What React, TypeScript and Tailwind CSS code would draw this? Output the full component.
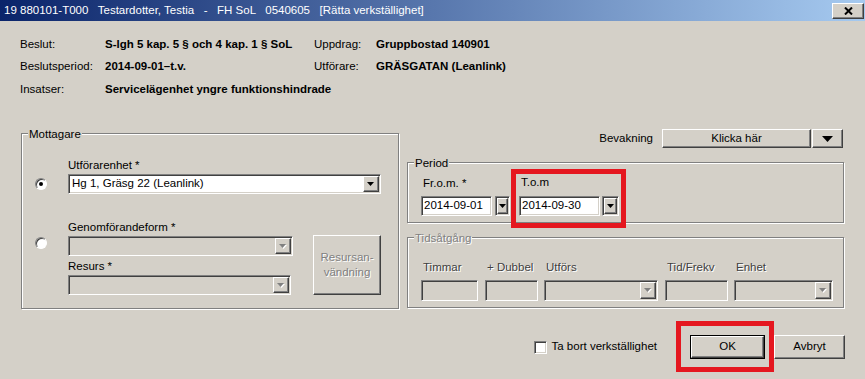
import React from "react";

const sunken =
  "border border-t-[#808080] border-l-[#808080] border-b-white border-r-white shadow-[inset_1px_1px_0_#404040,inset_-1px_-1px_0_#d4d0c8]";
const raised =
  "border border-t-white border-l-white border-b-[#404040] border-r-[#404040] shadow-[inset_-1px_-1px_0_#808080,inset_1px_1px_0_#d4d0c8] bg-[#d4d0c8]";
const disabledText = "text-[#808080] [text-shadow:1px_1px_0_#fff]";

function Arrow({ disabled, big }: { disabled?: boolean; big?: boolean }) {
  if (big) {
    return (
      <svg width="11" height="6" viewBox="0 0 11 6">
        <path d="M0 0h11L5.5 6z" fill="#000" />
      </svg>
    );
  }
  return (
    <svg width="8" height="5" viewBox="0 0 8 5">
      {disabled && <path d="M1 1h7L4.5 5z" fill="#fff" />}
      <path d="M0 0h7L3.5 4z" fill={disabled ? "#808080" : "#000"} />
    </svg>
  );
}

function DropBtn({ disabled }: { disabled?: boolean }) {
  return (
    <div className={`${raised} w-[16px] flex items-center justify-center`}>
      <Arrow disabled={disabled} />
    </div>
  );
}

function Combo({
  value,
  disabled,
  className,
}: {
  value?: string;
  disabled?: boolean;
  className: string;
}) {
  return (
    <div
      className={`${sunken} ${disabled ? "bg-[#d4d0c8]" : "bg-white"} flex p-[1px] ${className}`}
    >
      <div className="flex-1 pl-[2px] flex items-center truncate">{value}</div>
      <DropBtn disabled={disabled} />
    </div>
  );
}

function DateField({ value, width, btn }: { value: string; width: string; btn: string }) {
  return (
    <div className="flex h-[20px]">
      <div className={`${sunken} bg-white ${width} pl-[2px] flex items-center`}>{value}</div>
      <div className={`${sunken} ${btn} p-[1px] flex`}>
        <div className={`${raised} flex-1 flex items-center justify-center`}>
          <Arrow />
        </div>
      </div>
    </div>
  );
}

function Group({
  title,
  disabled,
  className,
  children,
}: {
  title: string;
  disabled?: boolean;
  className: string;
  children: React.ReactNode;
}) {
  return (
    <div
      className={`border border-[#808080] shadow-[1px_1px_0_#fff,inset_1px_1px_0_#fff] ${className}`}
    >
      <div
        className={`-mt-[7px] ml-[6px] w-fit px-[1px] bg-[#d4d0c8] leading-[14px] ${disabled ? disabledText : ""}`}
      >
        {title}
      </div>
      {children}
    </div>
  );
}

function Radio({ checked, className }: { checked?: boolean; className: string }) {
  return (
    <div
      className={`w-[12px] h-[12px] rounded-full border border-t-[#808080] border-l-[#808080] border-b-white border-r-white bg-white shadow-[inset_1px_1px_0_#404040] flex items-center justify-center ${className}`}
    >
      {checked && <div className="w-[4px] h-[4px] rounded-full bg-black" />}
    </div>
  );
}

const info = [
  ["Beslut:", "S-lgh 5 kap. 5 § och 4 kap. 1 § SoL", "Uppdrag:", "Gruppbostad 140901"],
  ["Beslutsperiod:", "2014-09-01–t.v.", "Utförare:", "GRÄSGATAN (Leanlink)"],
  ["Insatser:", "Servicelägenhet yngre funktionshindrade", "", ""],
];

const tids = [
  { label: "Timmar", w: "w-[57px]", ml: "ml-0", combo: false },
  { label: "+ Dubbel", w: "w-[53px]", ml: "ml-[7px]", combo: false },
  { label: "Utförs", w: "w-[114px]", ml: "ml-[6px]", combo: true },
  { label: "Tid/Frekv", w: "w-[63px]", ml: "ml-[7px]", combo: false },
  { label: "Enhet", w: "w-[99px]", ml: "ml-[6px]", combo: true },
];

export default function App() {
  return (
    <div className="relative w-[865px] h-[379px] overflow-hidden bg-[#d4d0c8] flex flex-col text-[11.5px] text-black font-['Liberation_Sans',Arial,sans-serif]">
      {/* title bar */}
      <div className="h-[21px] shrink-0 flex items-center pl-[4px] pr-[1px] bg-linear-to-r/srgb from-[#0a246a] to-[#a6caf0] text-white text-[11.5px]">
        <span className="whitespace-pre">
          19 880101-T000   Testardotter, Testia   -   FH SoL   0540605   [Rätta verkställighet]
        </span>
        <div className={`${raised} ml-auto w-[32px] h-[16px] flex items-center justify-center`}>
          <svg width="9" height="8" viewBox="0 0 9 8">
            <path d="M1 0.5l7 7M8 0.5l-7 7" stroke="#000" strokeWidth="2" />
          </svg>
        </div>
      </div>

      {/* decision info */}
      <div className="mt-[12px] pl-[20px] grid grid-cols-[85px_209px_62px_auto] auto-rows-[22.5px] items-center">
        {info.map((r) => (
          <React.Fragment key={r[0]}>
            <div>{r[0]}</div>
            <div className={`font-bold ${r[0] === "Insatser:" ? "col-span-3" : ""}`}>{r[1]}</div>
            {r[2] && <div>{r[2]}</div>}
            {r[2] && <div className="font-bold">{r[3]}</div>}
          </React.Fragment>
        ))}
      </div>

      {/* main */}
      <div className="mt-[28.5px] pl-[21px] flex">
        <Group title="Mottagare" className="mt-[4px] w-[378px] h-[176px]">
          <div className="mt-[17px] pl-[13px] flex">
            <Radio checked className="self-end mb-[4px] mr-[21px]" />
            <div className="flex flex-col">
              <div className="leading-[14px]">Utförarenhet *</div>
              <Combo value="Hg 1, Gräsg 22 (Leanlink)" className="mt-[2px] w-[313px] h-[20px]" />
            </div>
          </div>
          <div className="mt-[26px] pl-[13px] flex">
            <Radio className="mt-[17px] mr-[21px]" />
            <div className="flex flex-col">
              <div className="leading-[14px]">Genomförandeform *</div>
              <Combo disabled className="mt-[2px] w-[225px] h-[20px]" />
              <div className="mt-[3px] leading-[14px]">Resurs *</div>
              <Combo disabled className="mt-[2px] w-[223px] h-[20px]" />
            </div>
            <div
              className={`${raised} ml-[20px] mt-[15px] w-[68px] h-[60px] flex items-center justify-center text-center leading-[15px] ${disabledText}`}
            >
              Resursan-
              <br />
              vändning
            </div>
          </div>
        </Group>

        <div className="ml-[8px] w-[437px] flex flex-col">
          <div className="h-[19px] flex items-center justify-end pr-[1px]">
            <span className="mr-[9px]">Bevakning</span>
            <div className={`${raised} w-[149px] h-[19px] flex items-center justify-center`}>
              Klicka här
            </div>
            <div className={`${raised} ml-[1px] w-[31px] h-[19px] flex items-center justify-center`}>
              <Arrow big />
            </div>
          </div>

          <Group title="Period" className="mt-[14px] h-[61px]">
            <div className="pl-[13px] flex">
              <div className="flex flex-col">
                <div className="mt-[6px] pl-[2px] leading-[14px]">Fr.o.m. *</div>
                <div className="mt-[6px] flex">
                  <DateField value="2014-09-01" width="w-[71px]" btn="ml-[3px] w-[15px]" />
                </div>
              </div>
              <div className="ml-[9px] flex flex-col">
                <div className="mt-[5px] pl-[2px] leading-[14px]">T.o.m</div>
                <div className="mt-[7px] flex">
                  <DateField value="2014-09-30" width="w-[81px]" btn="ml-[2px] w-[17px]" />
                </div>
              </div>
            </div>
          </Group>

          <Group title="Tidsåtgång" disabled className="mt-[14px] h-[71px]">
            <div className="pl-[13px] mt-[15px] flex">
              {tids.map((t) => (
                <div key={t.label} className={`flex flex-col ${t.ml}`}>
                  <div className="pl-[2px] leading-[14px] text-[#404040] [text-shadow:1px_1px_0_#fff]">
                    {t.label}
                  </div>
                  {t.combo ? (
                    <Combo disabled className={`mt-[6px] h-[21px] ${t.w}`} />
                  ) : (
                    <div className={`${sunken} mt-[6px] h-[21px] ${t.w}`} />
                  )}
                </div>
              ))}
            </div>
          </Group>
        </div>
      </div>

      {/* footer */}
      <div className="mt-[26px] h-[24px] pr-[20px] flex items-center justify-end">
        <div className={`${sunken} w-[13px] h-[13px] bg-white`} />
        <span className="ml-[5px]">Ta bort verkställighet</span>
        <div className="ml-[33px] w-[75px] h-[24px] border border-black flex">
          <div className={`${raised} flex-1 flex items-center justify-center`}>OK</div>
        </div>
        <div className={`${raised} ml-[9px] w-[71px] h-[24px] flex items-center justify-center`}>
          Avbryt
        </div>
      </div>

      {/* red annotation boxes */}
      <div className="absolute left-[511px] top-[169px] w-[115px] h-[59px] border-[5px] border-[#e5171f]" />
      <div className="absolute left-[676px] top-[321px] w-[98px] h-[51px] border-[5px] border-[#e5171f]" />
    </div>
  );
}
